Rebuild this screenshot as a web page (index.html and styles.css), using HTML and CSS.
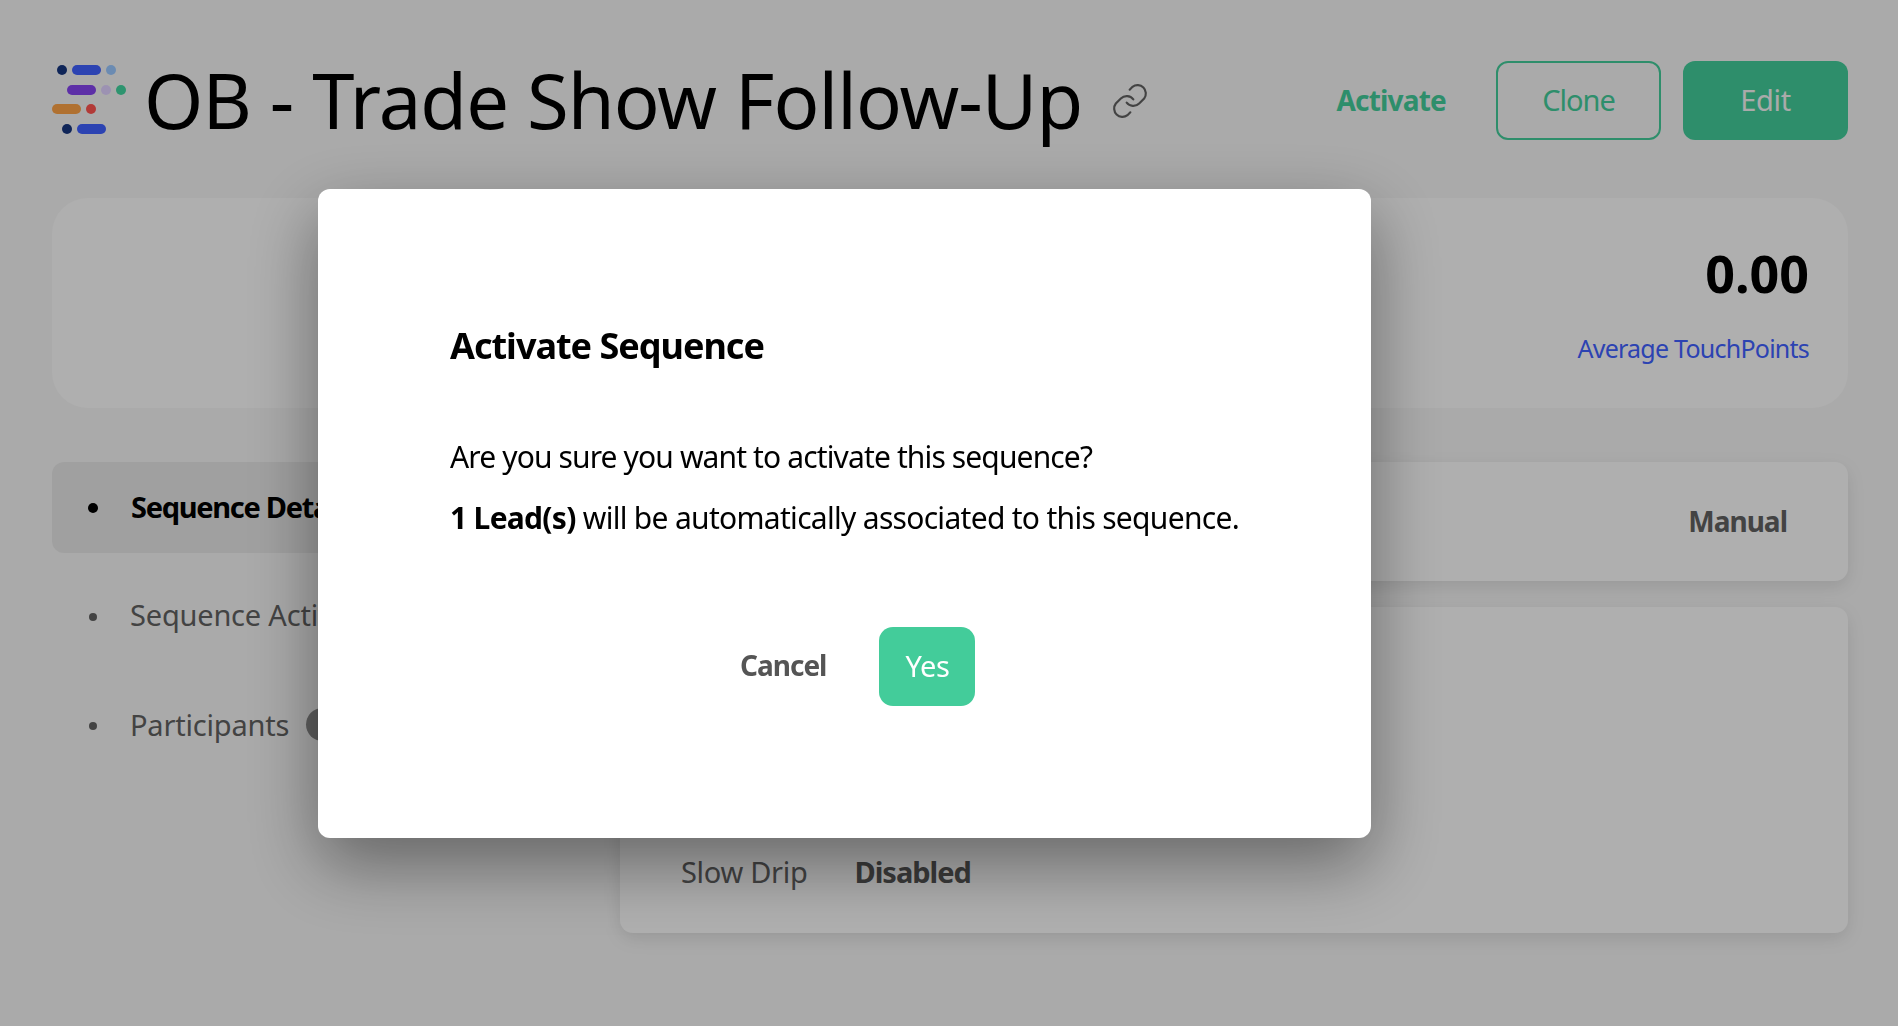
FILE: index.html
```html
<!DOCTYPE html>
<html lang="en">
<head>
<meta charset="utf-8">
<title>OB - Trade Show Follow-Up</title>
<link rel="stylesheet" href="styles.css">
</head>
<body>
<main class="page">
  <header class="header">
    <svg class="logo" width="74" height="70" viewBox="0 0 74 70">
      <circle cx="10" cy="6" r="5" fill="#16357f"/><rect x="20" y="1" width="29" height="10" rx="5" fill="#3f60ff"/><circle cx="59" cy="6" r="5" fill="#9ac8ff"/>
      <rect x="15" y="21" width="29" height="10" rx="5" fill="#8644f0"/><circle cx="54" cy="26" r="5" fill="#e0d2ff"/><circle cx="69" cy="26" r="5" fill="#43d4a0"/>
      <rect x="0" y="40" width="29" height="10" rx="5" fill="#fda347"/><circle cx="39" cy="45" r="5" fill="#ff5350"/>
      <circle cx="15" cy="65" r="5" fill="#16357f"/><rect x="25" y="60" width="29" height="10" rx="5" fill="#3f60ff"/>
    </svg>
    <h1 class="title">OB - Trade Show Follow-Up</h1>
    <svg class="link-icon" width="40" height="40" viewBox="0 0 24 24" fill="none" stroke="#616161" stroke-width="1.3" stroke-linecap="round">
      <path d="M10 13a5 5 0 0 0 7.5.5l3-3a5 5 0 0 0-7-7l-1.7 1.7"/>
      <path d="M14 11a5 5 0 0 0-7.5-.5l-3 3a5 5 0 0 0 7 7l1.7-1.7"/>
    </svg>
    <div class="actions">
      <button class="btn btn-text">Activate</button>
      <button class="btn btn-outline">Clone</button>
      <button class="btn btn-solid">Edit</button>
    </div>
  </header>

  <section class="stats">
    <div class="stat">
      <div class="stat-value">0.00</div>
      <div class="stat-label">Average TouchPoints</div>
    </div>
  </section>

  <div class="content">
    <nav class="side">
      <ul class="side-list">
        <li class="side-item side-item-active"><span class="dot"></span>Sequence Details</li>
        <li class="side-item"><span class="dot"></span>Sequence Activity</li>
        <li class="side-item"><span class="dot"></span>Participants<span class="badge">1</span></li>
      </ul>
    </nav>
    <div class="panels">
      <div class="panel panel-top"><span class="manual">Manual</span></div>
      <div class="panel panel-main">
        <div class="row"><span class="row-label">Slow Drip</span><span class="row-value">Disabled</span></div>
      </div>
    </div>
  </div>
</main>

<div class="overlay">
  <div class="modal" role="dialog">
    <h2 class="modal-title">Activate Sequence</h2>
    <p class="modal-line modal-line-first">Are you sure you want to activate this sequence?</p>
    <p class="modal-line"><strong>1 Lead(s)</strong> will be automatically associated to this sequence.</p>
    <div class="modal-actions">
      <button class="modal-cancel">Cancel</button>
      <button class="modal-yes">Yes</button>
    </div>
  </div>
</div>
</body>
</html>
```
FILE: styles.css
```css
* { box-sizing: border-box; }
html, body { margin: 0; height: 100%; }
body {
  background: #f4f4f4;
  font-family: "Noto Sans", "Open Sans", sans-serif;
  color: #000;
  overflow: hidden;
}
button { font-family: inherit; cursor: pointer; }
.page { padding: 61px 50px 0 52px; height: 1026px; }

.header { display: flex; align-items: center; height: 79px; }
.logo { flex: none; margin-top: -4px; }
.title { margin: 0 0 2px 18px; font-size: 76px; font-weight: 400; line-height: 79px; letter-spacing: -.92px; white-space: nowrap; }
.link-icon { margin-left: 28px; flex: none; }
.actions { margin-left: auto; display: flex; align-items: center; gap: 22px; }
.btn { height: 79px; width: 165px; border-radius: 12px; font-size: 29px; padding: 0 0 2px; }
.btn-text { width: auto; border: 0; background: none; color: #43cc9a; font-size: 28px; font-weight: 700; letter-spacing: -.8px; margin-right: 28px; }
.btn-outline { background: none; border: 2px solid #43cc9a; color: #43cc9a; letter-spacing: -1px; }
.btn-solid { background: #43cc9a; border: 0; color: #f4f4f4; letter-spacing: -.3px; }

.stats {
  margin-top: 58px; height: 210px; border-radius: 36px; background: #fbfbfb;
  display: flex; justify-content: flex-end; padding: 44px 39px 0 0;
}
.stat { text-align: right; }
.stat-value { font-size: 52px; font-weight: 700; line-height: 62px; }
.stat-label { margin-top: 27px; font-size: 25px; letter-spacing: -.76px; line-height: 34px; color: #3f60ff; }

.content { margin-top: 54px; display: flex; gap: 0; }
.side { width: 568px; flex: none; }
.side-list { list-style: none; margin: 0; padding: 0; }
.side-item {
  display: flex; align-items: center; height: 91px; padding: 0 0 4px 37px; margin-bottom: 18px;
  font-size: 29px; letter-spacing: -.2px; color: #616161; border-radius: 12px; white-space: nowrap;
}
.side-item-active { background: #e6e6e6; color: #000; font-weight: 700; letter-spacing: -1.3px; padding-bottom: 3px; }
.dot { width: 8px; height: 8px; border-radius: 50%; background: currentColor; margin: 4px 33px 0 0; flex: none; }
.side-item-active .dot { width: 10px; height: 10px; margin: 4px 33px 0 -1px; }
.side-item:last-child { padding-bottom: 3px; }
.badge { width: 33px; height: 33px; border-radius: 50%; background: #8a8a8a; margin-left: 17px; color: #8a8a8a; font-size: 14px; text-align: center; }

.panels { flex: 1; display: flex; flex-direction: column; gap: 26px; }
.panel { background: #fbfbfb; border-radius: 13px; box-shadow: 0 6px 18px rgba(0,0,0,.1); }
.panel-top { height: 119px; display: flex; align-items: center; justify-content: flex-end; padding: 0 61px 1px 0; }
.manual { font-size: 28px; letter-spacing: -1px; font-weight: 700; color: #616161; }
.panel-main { height: 326px; display: flex; flex-direction: column; justify-content: flex-end; padding: 0 0 41px 61px; }
.row { display: flex; gap: 47px; font-size: 29px; line-height: 40px; letter-spacing: -.3px; color: #616161; }
.row-value { font-weight: 700; color: #555; letter-spacing: -1px; }

.overlay {
  position: fixed; inset: 0; background: rgba(0,0,0,.3);
  display: flex; align-items: center; padding-left: 318px;
}
.modal {
  width: 1053px; height: 649px; background: #fff; border-radius: 12px;
  padding: 132px 132px 0;
  box-shadow: 0 26px 70px rgba(0,0,0,.42);
}
.modal-title { margin: 0 0 66px; font-size: 36px; letter-spacing: -1px; font-weight: 700; line-height: 50px; }
.modal-line { margin: 0 0 21px; font-size: 30px; letter-spacing: -.7px; line-height: 40px; white-space: nowrap; }
.modal-line-first { letter-spacing: -.87px; }
.modal-actions { margin-top: 89px; display: flex; align-items: center; gap: 53px; padding-left: 290px; }
.modal-cancel { border: 0; background: none; padding: 0 0 2px; font-size: 28px; letter-spacing: -1px; font-weight: 700; color: #555; }
.modal-yes { width: 96px; height: 79px; border: 0; border-radius: 14px; background: #43cc9a; color: #fff; font-size: 29px; letter-spacing: -.5px; padding: 0 0 2px; }
```
